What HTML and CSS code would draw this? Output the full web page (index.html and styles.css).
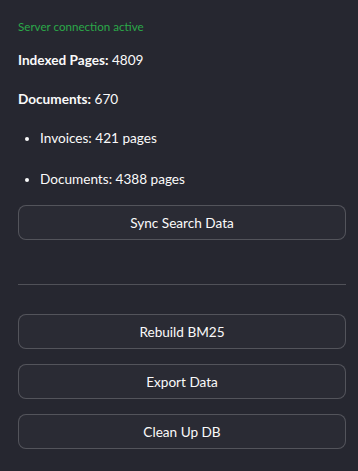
FILE: index.html
```html
<!DOCTYPE html>
<html lang="en">
<head>
  <meta charset="UTF-8">
  <meta name="viewport" content="width=device-width, initial-scale=1.0">
  <title>Search Admin</title>
  <link rel="stylesheet" href="styles.css">
</head>
<body>
  <div class="sidebar">
    <p class="status">Server connection active</p>
    <p class="stat"><strong>Indexed Pages:</strong> 4809</p>
    <p class="stat"><strong>Documents:</strong> 670</p>
    <ul class="breakdown">
      <li>Invoices: 421 pages</li>
      <li>Documents: 4388 pages</li>
    </ul>
    <button class="btn">Sync Search Data</button>

    <hr class="divider">

    <div class="actions">
      <button class="btn">Rebuild BM25</button>
      <button class="btn">Export Data</button>
      <button class="btn">Clean Up DB</button>
    </div>
  </div>
</body>
</html>
```

FILE: styles.css
```css
body {
  margin: 0;
  background-color: #262730;
  color: #fafafa;
  font-family: Lato, "Noto Sans", sans-serif;
}

.sidebar {
  padding: 17px 12px 20px 18px;
}

.status {
  margin: 0 0 13px;
  font-size: 11.6px;
  line-height: 20px;
  color: #2ba849;
}

.stat {
  margin: 0 0 19px;
  font-size: 13.6px;
  line-height: 20px;
}

.stat strong {
  font-weight: 700;
}

.breakdown {
  margin: 0 0 16px;
  padding-left: 22px;
  font-size: 13.6px;
  line-height: 20px;
}

.breakdown li {
  margin-bottom: 21px;
}

.breakdown li:last-child {
  margin-bottom: 0;
}

.btn {
  display: block;
  width: 100%;
  height: 35px;
  background-color: #2a2b34;
  color: #fafafa;
  border: 1px solid rgba(250, 250, 250, 0.2);
  border-radius: 8px;
  font-family: inherit;
  font-size: 13.6px;
  cursor: pointer;
}

.divider {
  margin: 44px 0 29px;
  border: none;
  border-top: 1px solid rgba(250, 250, 250, 0.2);
}

.actions {
  display: flex;
  flex-direction: column;
  gap: 15px;
}
```
